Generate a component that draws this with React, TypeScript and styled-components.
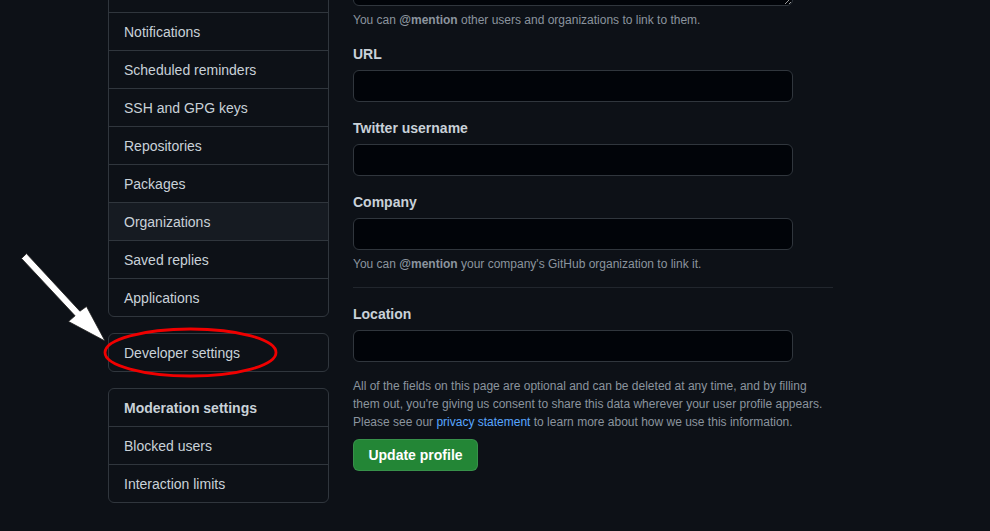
import React from "react";
import styled, { createGlobalStyle } from "styled-components";

const Global = createGlobalStyle`
  html, body { margin: 0; padding: 0; background: #0d1117; color-scheme: dark; }
  body {
    font-family: "Liberation Sans", Arial, sans-serif;
    color: #c9d1d9;
    overflow: hidden;
  }
`;

const Page = styled.div`
  position: relative;
  width: 990px;
  height: 531px;
  overflow: hidden;
  background: #0d1117;
`;

const Layout = styled.div`
  display: flex;
  gap: 24px;
  padding-left: 108px;
  align-items: flex-start;
`;

const Sidebar = styled.nav<{ $offset: number }>`
  width: 221px;
  flex: none;
  display: flex;
  flex-direction: column;
  gap: 16px;
  margin-top: ${(p) => p.$offset}px;
`;

const MenuBox = styled.div`
  border: 1px solid #30363d;
  border-radius: 6px;
  overflow: hidden;
  display: flex;
  flex-direction: column;
`;

const MenuItem = styled.div<{ $active?: boolean; $header?: boolean }>`
  height: 37px;
  box-sizing: border-box;
  padding-top: 1px;
  display: flex;
  align-items: center;
  padding-left: 15px;
  font-size: 14px;
  font-weight: ${(p) => (p.$header ? 700 : 400)};
  color: #c9d1d9;
  background: ${(p) => (p.$active ? "#161b22" : "transparent")};
  & + & { border-top: 1px solid #30363d; height: 38px; }
`;

const Main = styled.main<{ $offset: number }>`
  width: 480px;
  flex: none;
  display: flex;
  flex-direction: column;
  margin-top: ${(p) => p.$offset}px;
`;

const TextArea = styled.textarea`
  width: 440px;
  height: 100px;
  box-sizing: border-box;
  background: #010409;
  border: 1px solid #30363d;
  border-radius: 6px;
  resize: vertical;
  display: block;
`;

const Note = styled.p<{ $mt: number }>`
  margin: ${(p) => p.$mt}px 0 0;
  font-size: 12px;
  line-height: 18px;
  color: #8b949e;
  b { font-weight: 700; color: #8b949e; }
`;

const Field = styled.div<{ $mt: number }>`
  margin-top: ${(p) => p.$mt}px;
  display: flex;
  flex-direction: column;
  gap: 6px;
`;

const Label = styled.label`
  font-size: 14px;
  line-height: 20px;
  font-weight: 700;
  color: #c9d1d9;
`;

const Input = styled.input`
  width: 440px;
  height: 32px;
  box-sizing: border-box;
  background: #010409;
  border: 1px solid #30363d;
  border-radius: 6px;
  display: block;
`;

const Divider = styled.hr`
  margin: 14px 0 0;
  border: 0;
  border-top: 1px solid #21262d;
  width: 480px;
`;

const Info = styled.p`
  margin: 15px 0 0;
  font-size: 12px;
  line-height: 18px;
  color: #8b949e;
  a { color: #58a6ff; text-decoration: none; }
`;

const Button = styled.button`
  margin-top: 8px;
  align-self: flex-start;
  height: 32px;
  width: 125px;
  padding: 0;
  background: #238636;
  border: 1px solid rgba(240, 246, 252, 0.1);
  border-radius: 6px;
  color: #ffffff;
  font-family: inherit;
  font-size: 14px;
  font-weight: 700;
`;

const Overlay = styled.svg`
  position: absolute;
  left: 0;
  top: 0;
  pointer-events: none;
`;

const topItems = ["Emails"];
const mainItems = [
  "Notifications",
  "Scheduled reminders",
  "SSH and GPG keys",
  "Repositories",
  "Packages",
  "Organizations",
  "Saved replies",
  "Applications",
];

export default function App() {
  return (
    <Page>
      <Global />
      <Layout>
        <Sidebar $offset={-26}>
          <MenuBox>
            {topItems.map((t) => (
              <MenuItem key={t} />
            ))}
            {mainItems.map((t) => (
              <MenuItem key={t} $active={t === "Organizations"}>
                {t}
              </MenuItem>
            ))}
          </MenuBox>
          <MenuBox>
            <MenuItem>Developer settings</MenuItem>
          </MenuBox>
          <MenuBox>
            <MenuItem $header>Moderation settings</MenuItem>
            <MenuItem>Blocked users</MenuItem>
            <MenuItem>Interaction limits</MenuItem>
          </MenuBox>
        </Sidebar>
        <Main $offset={-94}>
          <TextArea aria-label="Bio" />
          <Note $mt={5}>
            You can <b>@mention</b> other users and organizations to link to them.
          </Note>
          <Field $mt={15}>
            <Label>URL</Label>
            <Input />
          </Field>
          <Field $mt={16}>
            <Label>Twitter username</Label>
            <Input />
          </Field>
          <Field $mt={16}>
            <Label>Company</Label>
            <Input />
          </Field>
          <Note $mt={5}>
            You can <b>@mention</b> your company's GitHub organization to link it.
          </Note>
          <Divider />
          <Field $mt={16}>
            <Label>Location</Label>
            <Input />
          </Field>
          <Info>
            All of the fields on this page are optional and can be deleted at any time, and by filling
            <br />
            them out, you're giving us consent to share this data wherever your user profile appears.
            <br />
            Please see our <a href="#">privacy statement</a> to learn more about how we use this
            information.
          </Info>
          <Button>Update profile</Button>
        </Main>
      </Layout>
      <Overlay width="990" height="531" viewBox="0 0 990 531">
        <polygon
          points="26.5,253.6 79.9,311.2 86.5,306.5 105,341 68.5,321.5 75.1,315.8 21.5,258.4"
          fill="#ffffff"
          stroke="#202020"
          strokeWidth="0.8"
          strokeLinejoin="round"
        />
        <ellipse cx="190.5" cy="352.5" rx="85.5" ry="23.5" fill="none" stroke="#f00000" strokeWidth="2.8" />
      </Overlay>
    </Page>
  );
}
